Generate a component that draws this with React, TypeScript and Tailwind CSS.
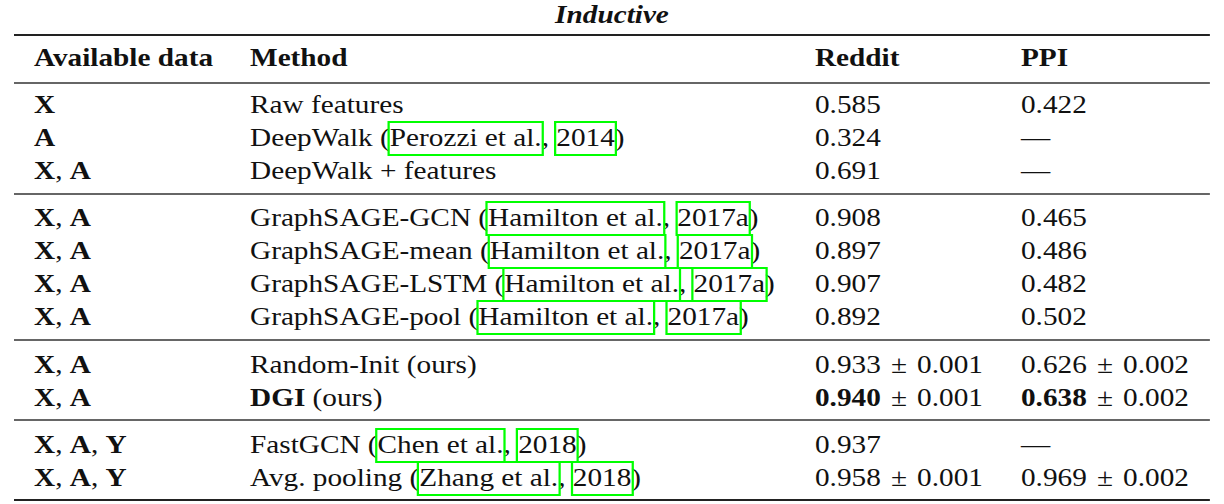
import React from "react";

const Cite = ({ children }: { children: React.ReactNode }) => (
  <span className="outline-2 outline-solid outline-[#00ff00] pb-[2px]">{children}</span>
);

const B = ({ children }: { children: React.ReactNode }) => <span className="font-bold">{children}</span>;

const XA = () => (
  <>
    <B>X</B>, <B>A</B>
  </>
);
const XAY = () => (
  <>
    <B>X</B>, <B>A</B>, <B>Y</B>
  </>
);

type Row = [React.ReactNode, React.ReactNode, React.ReactNode, React.ReactNode];

const Line = ({ row }: { row: Row }) => (
  <div className="grid grid-cols-[209.8px_502.2px_183.1px_1fr] leading-[33px] whitespace-nowrap">
    <div className="pl-[17.8px]">{row[0]}</div>
    <div>{row[1]}</div>
    <div>{row[2]}</div>
    <div>{row[3]}</div>
  </div>
);

const pm = (a: React.ReactNode, b: string) => (
  <>
    {a} <span className="mx-[2.5px]">±</span> {b}
  </>
);

const group1: Row[] = [
  [<B>X</B>, "Raw features", "0.585", "0.422"],
  [
    <B>A</B>,
    <>
      DeepWalk (<Cite>Perozzi et al.</Cite>, <Cite>2014</Cite>)
    </>,
    "0.324",
    "—",
  ],
  [<XA />, "DeepWalk + features", "0.691", "—"],
];

const sage = (name: string): React.ReactNode => (
  <>
    GraphSAGE-{name} (<Cite>Hamilton et al.</Cite>, <Cite>2017a</Cite>)
  </>
);

const group2: Row[] = [
  [<XA />, sage("GCN"), "0.908", "0.465"],
  [<XA />, sage("mean"), "0.897", "0.486"],
  [<XA />, sage("LSTM"), "0.907", "0.482"],
  [<XA />, sage("pool"), "0.892", "0.502"],
];

const group3: Row[] = [
  [<XA />, "Random-Init (ours)", pm("0.933", "0.001"), pm("0.626", "0.002")],
  [
    <XA />,
    <>
      <B>DGI</B> (ours)
    </>,
    pm(<B>0.940</B>, "0.001"),
    pm(<B>0.638</B>, "0.002"),
  ],
];

const group4: Row[] = [
  [
    <XAY />,
    <>
      FastGCN (<Cite>Chen et al.</Cite>, <Cite>2018</Cite>)
    </>,
    "0.937",
    "—",
  ],
  [
    <XAY />,
    <>
      Avg. pooling (<Cite>Zhang et al.</Cite>, <Cite>2018</Cite>)
    </>,
    pm("0.958", "0.001"),
    pm("0.969", "0.002"),
  ],
];

export default function App() {
  return (
    <div className="w-[1224px] h-[504px] bg-white text-[#111] font-['Liberation_Serif',serif] text-[26px] overflow-hidden">
      <div className="ml-[14px] w-[1063.1px] origin-left scale-x-[1.125]">
        <div className="h-[34px] pt-[1px] leading-[28px] text-center font-bold italic">Inductive</div>
        <div className="h-[2px] bg-[#222]" />
        <div className="pt-[5px] pb-[8px] font-bold">
          <Line row={["Available data", "Method", "Reddit", "PPI"]} />
        </div>
        <div className="h-[2px] bg-[#666]" />
        <div className="pt-[4px] pb-[6px]">
          {group1.map((r, i) => (
            <Line key={i} row={r} />
          ))}
        </div>
        <div className="h-[2px] bg-[#666]" />
        <div className="pt-[6px] pb-[6px]">
          {group2.map((r, i) => (
            <Line key={i} row={r} />
          ))}
        </div>
        <div className="h-[2px] bg-[#666]" />
        <div className="pt-[7px] pb-[5px]">
          {group3.map((r, i) => (
            <Line key={i} row={r} />
          ))}
        </div>
        <div className="h-[2px] bg-[#666]" />
        <div className="pt-[7px] pb-[5px]">
          {group4.map((r, i) => (
            <Line key={i} row={r} />
          ))}
        </div>
        <div className="h-[2px] bg-[#222]" />
      </div>
    </div>
  );
}
